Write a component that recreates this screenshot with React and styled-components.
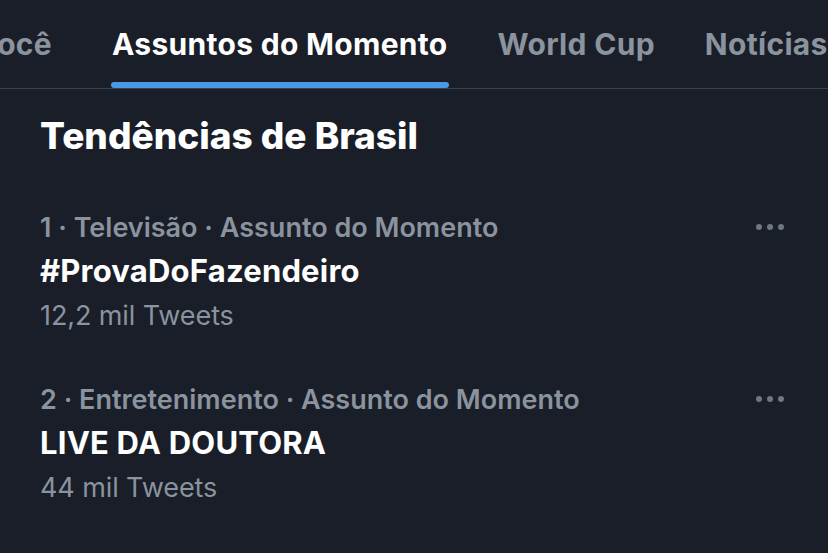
import React from 'react';
import styled, { createGlobalStyle } from 'styled-components';

const Global = createGlobalStyle`
  html, body {
    margin: 0;
    padding: 0;
    background: #191e28;
  }
  body {
    font-family: Inter, "Noto Sans", sans-serif;
    -webkit-font-smoothing: antialiased;
  }
  * {
    box-sizing: border-box;
  }
`;

const Page = styled.div`
  width: 828px;
  height: 553px;
  background: #191e28;
  overflow: hidden;
`;

const TabBar = styled.nav`
  display: flex;
  height: 89px;
  border-bottom: 1px solid #3b414b;
  overflow: hidden;
`;

const Tab = styled.div`
  position: relative;
  flex: none;
  display: flex;
  align-items: center;
  justify-content: ${p => (p.$cut ? 'flex-end' : 'center')};
  width: ${p => (p.$cut ? '87px' : 'auto')};
  overflow: hidden;
  padding: 0 25px;
  padding-right: ${p => (p.$cut ? '35px' : '25px')};
  padding-left: ${p => (p.$cut ? '0' : '25px')};
  font-size: 30px;
  font-weight: 700;
  letter-spacing: 0.3px;
  white-space: nowrap;
  color: ${p => (p.$active ? '#ffffff' : '#8a939e')};
`;

const Indicator = styled.span`
  position: absolute;
  left: 24px;
  right: 24px;
  bottom: 0;
  height: 6px;
  border-radius: 3px;
  background: #4a98e6;
`;

const Heading = styled.h2`
  margin: 0;
  padding: 24px 40px 0;
  font-size: 37px;
  line-height: 46px;
  font-weight: 800;
  color: #ffffff;
`;

const List = styled.div`
  display: flex;
  flex-direction: column;
  padding-top: 49px;
  gap: 42px;
`;

const Trend = styled.div`
  display: flex;
  justify-content: space-between;
  align-items: flex-start;
  padding: 0 40px;
`;

const Texts = styled.div`
  display: flex;
  flex-direction: column;
`;

const Meta = styled.div`
  font-size: 27px;
  line-height: 40px;
  font-weight: 600;
  color: #8a939e;
`;

const Title = styled.div`
  font-size: 31px;
  line-height: 46px;
  font-weight: 700;
  letter-spacing: 0.2px;
  color: #ffffff;
`;

const Count = styled.div`
  font-size: 27px;
  line-height: 44px;
  font-weight: 400;
  letter-spacing: -0.1px;
  color: #8a939e;
`;

const More = styled.svg`
  width: 30px;
  height: 8px;
  margin-top: 15px;
  margin-right: 3px;
  flex: none;
`;

const trends = [
  { rank: 1, category: 'Televisão', name: '#ProvaDoFazendeiro', count: '12,2 mil Tweets' },
  { rank: 2, category: 'Entretenimento', name: 'LIVE DA DOUTORA', count: '44 mil Tweets' },
];

export default function App() {
  return (
    <Page>
      <Global />
      <TabBar>
        <Tab $cut>Para você</Tab>
        <Tab $active>
          Assuntos do Momento
          <Indicator />
        </Tab>
        <Tab>World Cup</Tab>
        <Tab>Notícias</Tab>
      </TabBar>
      <Heading>Tendências de Brasil</Heading>
      <List>
        {trends.map(t => (
          <Trend key={t.rank}>
            <Texts>
              <Meta>{t.rank} · {t.category} · Assunto do Momento</Meta>
              <Title>{t.name}</Title>
              <Count>{t.count}</Count>
            </Texts>
            <More viewBox="0 0 30 8">
              <circle cx="4" cy="4" r="3" fill="#6e7782" />
              <circle cx="15" cy="4" r="3" fill="#6e7782" />
              <circle cx="26" cy="4" r="3" fill="#6e7782" />
            </More>
          </Trend>
        ))}
      </List>
    </Page>
  );
}
